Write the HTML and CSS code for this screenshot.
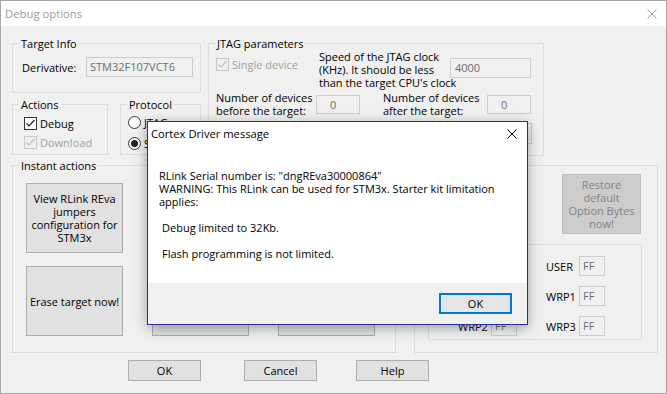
FILE: index.html
```html
<!DOCTYPE html>
<html lang="en">
  <head>
    <meta charset="UTF-8" />
    <title>Debug options</title>
    <link rel="stylesheet" href="styles.css">
  </head>
  <body>
    <div class="win">
      <div class="titlebar">
        <span>Debug options</span>
        <svg class="x" width="10" height="10" viewBox="0 0 10 10"><path d="M0.5 0.5L9.5 9.5M9.5 0.5L0.5 9.5" stroke="#9a9a9a" stroke-width="1" /></svg>
      </div>
      <div class="client">
        <div class="row top">
          <div class="leftcol">
            <fieldset class="grp target">
              <legend>Target Info</legend>
              <div class="line">
                <span class="lbl-deriv">Derivative:</span>
                <div class="edit deriv">STM32F107VCT6</div>
              </div>
            </fieldset>
            <div class="row pair">
              <fieldset class="grp actions">
                <legend>Actions</legend>
                <div class="chk">
                  <svg width="13" height="13" viewBox="0 0 13 13"><rect x="0.5" y="0.5" width="12" height="12" fill="#fff" stroke="#333" /><path d="M2.5 6.5L5 9L10.5 3" fill="none" stroke="#222" stroke-width="1.2" /></svg>
                  <span>Debug</span>
                </div>
                <div class="chk off">
                  <svg width="13" height="13" viewBox="0 0 13 13"><rect x="0.5" y="0.5" width="12" height="12" fill="#f0f0f0" stroke="#c6c6c6" /><path d="M2.5 6.5L5 9L10.5 3" fill="none" stroke="#c0c0c0" stroke-width="1.2" /></svg>
                  <span>Download</span>
                </div>
              </fieldset>
              <fieldset class="grp protocol">
                <legend>Protocol</legend>
                <div class="radio">
                  <svg width="13" height="13" viewBox="0 0 13 13"><circle cx="6.5" cy="6.5" r="6" fill="#fff" stroke="#333" /></svg>
                  <span>JTAG</span>
                </div>
                <div class="radio">
                  <svg width="13" height="13" viewBox="0 0 13 13"><circle cx="6.5" cy="6.5" r="6" fill="#fff" stroke="#333" /><circle cx="6.5" cy="6.5" r="3.5" fill="#222" /></svg>
                  <span>SWD</span>
                </div>
              </fieldset>
            </div>
          </div>
          <fieldset class="grp jtag">
            <legend>JTAG parameters</legend>
            <div class="row ja">
              <div class="chk off single">
                <svg width="13" height="13" viewBox="0 0 13 13"><rect x="0.5" y="0.5" width="12" height="12" fill="#f0f0f0" stroke="#c6c6c6" /><path d="M2.5 6.5L5 9L10.5 3" fill="none" stroke="#c0c0c0" stroke-width="1.2" /></svg>
                <span>Single device</span>
              </div>
              <div class="speed">Speed of the JTAG clock<br />(KHz). It should be less<br />than the target CPU's clock</div>
              <div class="edit clock">4000</div>
            </div>
            <div class="row jb">
              <div class="ndev">Number of devices<br />before the target:</div>
              <div class="edit num">0</div>
              <div class="ndev after">Number of devices<br />after the target:</div>
              <div class="edit num">0</div>
            </div>
            <div class="row jc">
              <div class="edit ir"></div>
            </div>
          </fieldset>
        </div>

        <div class="row mid">
          <fieldset class="grp instant">
            <legend>Instant actions</legend>
            <div class="btngrid">
              <div class="btn big">View RLink REva jumpers configuration for STM3x</div>
              <div class="btn big"></div>
              <div class="btn big"></div>
              <div class="btn big">Erase target now!</div>
              <div class="btn big"></div>
              <div class="btn big"></div>
            </div>
          </fieldset>
          <div class="grp opts">
            <div class="btn restore">Restore default Option Bytes now!</div>
            <div class="grp inner">
              <div class="obrow">
                <div class="obcell"><span></span><div class="edit ob"></div></div>
                <div class="obcell"><span>USER</span><div class="edit ob">FF</div></div>
              </div>
              <div class="obrow">
                <div class="obcell"><span></span><div class="edit ob"></div></div>
                <div class="obcell"><span>WRP1</span><div class="edit ob">FF</div></div>
              </div>
              <div class="obrow">
                <div class="obcell"><span>WRP2</span><div class="edit ob">FF</div></div>
                <div class="obcell"><span>WRP3</span><div class="edit ob">FF</div></div>
              </div>
            </div>
          </div>
        </div>

        <div class="row bottom">
          <div class="btn dlg">OK</div>
          <div class="btn dlg cancel">Cancel</div>
          <div class="btn dlg help">Help</div>
        </div>
      </div>

      <div class="msgbox">
        <div class="mtitle">
          <span>Cortex Driver message</span>
          <svg width="10" height="10" viewBox="0 0 10 10"><path d="M0.5 0.5L9.5 9.5M9.5 0.5L0.5 9.5" stroke="#000" stroke-width="1" /></svg>
        </div>
        <div class="mbody">
          RLink Serial number is: "dngREva30000864"<br />
          WARNING: This RLink can be used for STM3x. Starter kit limitation<br />
          applies:<br />
          <br />
          <span class="ind">Debug limited to 32Kb.</span><br />
          <br />
          <span class="ind">Flash programming is not limited.</span>
        </div>
        <div class="mfoot">
          <div class="btn mok">OK</div>
        </div>
      </div>
    </div>
  </body>
</html>
```

FILE: styles.css
```css
* {
  box-sizing: border-box;
}
body {
  margin: 0;
}
.win {
  position: relative;
  width: 667px;
  height: 394px;
  border: 1px solid #a8a8a8;
  background: #f0f0f0;
  font-family: "Open Sans", sans-serif;
  font-size: 11px;
  line-height: 13px;
  color: #000;
  overflow: hidden;
}
.titlebar {
  height: 25px;
  background: #fff;
  display: flex;
  align-items: center;
  justify-content: space-between;
  padding: 0 9px 0 4px;
  color: #9a9a9a;
  font-size: 11.3px;
}
.client {
  padding: 11px 0 0 11px;
}
.row {
  display: flex;
}
.grp {
  margin: 0;
  padding: 0;
  border: 1px solid #dcdcdc;
  min-width: 0;
}
.grp legend {
  margin-left: 6px;
  padding: 0 2px;
  line-height: 13px;
}
.edit {
  height: 20px;
  border: 1px solid #cccccc;
  background: #f0f0f0;
  color: #6d6d6d;
  line-height: 18px;
  padding-left: 3px;
  white-space: nowrap;
}
.btn {
  background: #e1e1e1;
  border: 1px solid #adadad;
  display: flex;
  align-items: center;
  justify-content: center;
  text-align: center;
}

/* top row */
.top {
  height: 119px;
}
.leftcol {
  width: 189px;
}
.target {
  height: 56px;
}
.target .line {
  display: flex;
  align-items: center;
  padding: 7px 0 0 9px;
}
.lbl-deriv {
  width: 64px;
}
.deriv {
  width: 107px;
}
.pair {
  margin-top: 5px;
}
.actions {
  width: 96px;
  height: 57px;
}
.protocol {
  width: 81px;
  height: 57px;
  margin-left: 12px;
}
.chk,
.radio {
  display: flex;
  align-items: center;
  height: 13px;
  white-space: nowrap;
}
.chk svg,
.radio svg {
  flex: none;
  margin-right: 3px;
}
.actions .chk {
  margin: 6px 0 0 11px;
}
.off {
  color: #a0a0a0;
}
.protocol .radio {
  margin: 5px 0 0 7px;
}
.protocol .radio + .radio {
  margin-top: 8px;
}

.jtag {
  width: 336px;
  height: 119px;
  margin-left: 7px;
}
.ja,
.jb,
.jc {
  padding-left: 7px;
}
.single {
  width: 103px;
  margin-top: 8px;
}
.speed {
  width: 131px;
  white-space: nowrap;
}
.clock {
  width: 81px;
  margin-top: 8px;
  padding-left: 4px;
}
.jb {
  margin-top: 2px;
}
.ndev {
  width: 100px;
  white-space: nowrap;
}
.ndev.after {
  width: 104px;
  margin-left: 23px;
}
.num {
  width: 44px;
  height: 19px;
  margin-top: 4px;
  padding-left: 13px;
}
.ir {
  width: 45px;
  height: 21px;
  margin: 6px 0 0 271px;
}

/* middle row */
.mid {
  margin-top: 3px;
  align-items: flex-start;
}
.instant {
  width: 384px;
  height: 194px;
}
.btngrid {
  display: grid;
  grid-template-columns: repeat(3, 97px);
  grid-auto-rows: 70px;
  column-gap: 29px;
  row-gap: 13px;
  padding: 11px 0 0 13px;
}
.big {
  padding: 0 2px;
}
.opts {
  width: 244px;
  height: 188px;
  margin: 6px 0 0 18px;
  padding-top: 8px;
}
.restore {
  width: 79px;
  height: 60px;
  margin-left: 147px;
  background: #cccccc;
  border-color: #bfbfbf;
  color: #838383;
  padding: 0 4px;
}
.inner {
  width: 214px;
  height: 96px;
  margin: 10px 0 0 13px;
  padding-top: 11px;
}
.obrow {
  display: flex;
  height: 20px;
  margin-left: 29px;
}
.obrow + .obrow {
  margin-top: 10px;
}
.obcell {
  display: flex;
  align-items: center;
  width: 88px;
}
.obcell span {
  width: 33px;
}
.ob {
  width: 26px;
}

/* dialog buttons */
.bottom {
  margin: 7px 0 0 116px;
}
.dlg {
  width: 73px;
  height: 21px;
}
.cancel {
  margin-left: 43px;
}
.help {
  margin-left: 39px;
}

/* message box */
.msgbox {
  position: absolute;
  left: 146px;
  top: 120px;
  width: 381px;
  border: 1px solid #2b2ba0;
  background: #fff;
  box-shadow: 0 3px 12px rgba(0, 0, 0, 0.35);
}
.mtitle {
  height: 23px;
  display: flex;
  align-items: center;
  justify-content: space-between;
  padding: 0 10px 0 3px;
  font-size: 11.2px;
}
.mbody {
  height: 138px;
  padding: 24px 0 0 11px;
  white-space: nowrap;
}
.ind {
  padding-left: 3px;
}
.mfoot {
  height: 41px;
  background: #f0f0f0;
  display: flex;
  justify-content: flex-end;
  padding: 10px 15px 0 0;
}
.mok {
  width: 73px;
  height: 21px;
  border: 2px solid #0078d7;
  background: #e5e5e5;
}
```
